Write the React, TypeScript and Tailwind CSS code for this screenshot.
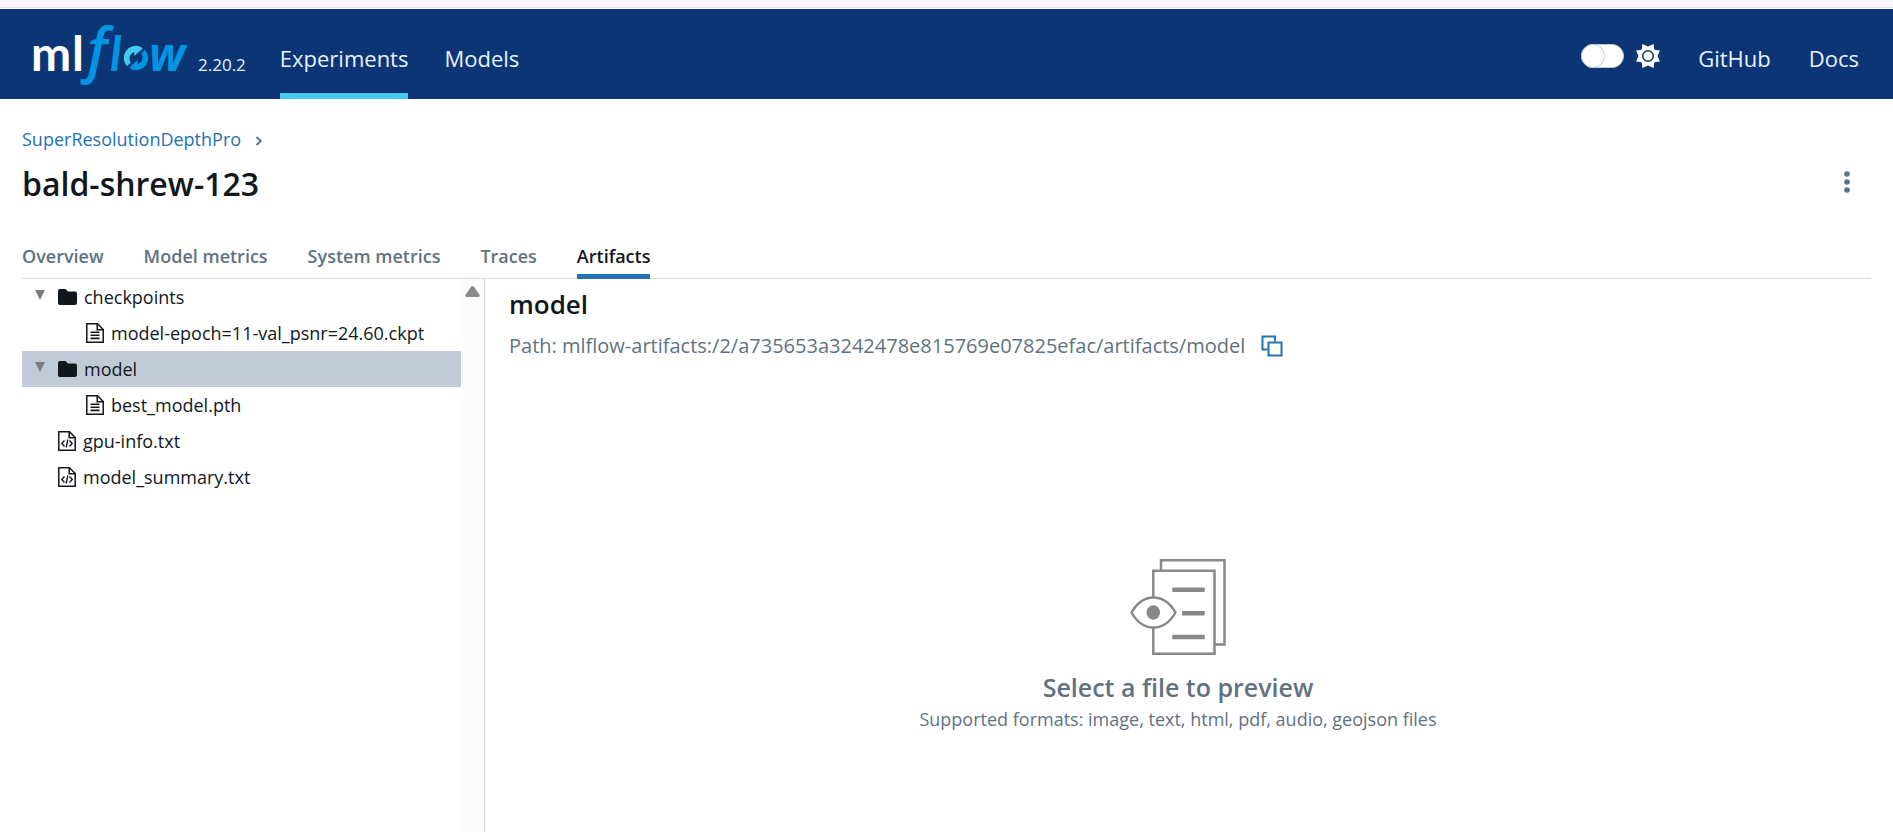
import React from "react";

const navLinks = [
  { label: "Experiments", active: true },
  { label: "Models", active: false },
];

const tabs = ["Overview", "Model metrics", "System metrics", "Traces", "Artifacts"];

function Logo() {
  return (
    <svg role="img" aria-label="mlflow" viewBox="0 0 156 66" className="h-[66px] w-[156px] shrink-0 overflow-visible">
      <g fill="#ffffff" fontFamily="Lato, sans-serif" fontSize="48" fontWeight="700">
        <text x="-3" y="50">m</text>
        <text x="38" y="50">l</text>
      </g>
      <g fill="#0194e2" fontStyle="italic">
        <text x="53" y="50" fontFamily="'Open Sans', sans-serif" fontSize="59" fontWeight="600">
          f
        </text>
        <text x="76" y="50" fontFamily="Lato, sans-serif" fontSize="48" fontWeight="700">
          l
        </text>
        <text x="115" y="50" fontFamily="'Open Sans', sans-serif" fontSize="46" fontWeight="700">
          w
        </text>
      </g>
      <path d="M93 45.300A12.200 12.200 0 0 1 106.500 25.700L108.700 27.500L100.300 35V31A6.800 6.800 0 0 0 96.800 41.500Z" fill="#43c9ed" />
      <path d="M111 28.700A12.200 12.200 0 0 1 97.500 48.300L95.300 46.500L103.700 39V43A6.800 6.800 0 0 0 107.200 32.500Z" fill="#0194e2" />
    </svg>
  );
}

function SunIcon() {
  return (
    <svg aria-hidden="true" viewBox="0 0 24 24" className="size-6">
      <path
        fill="#fff"
        d="M12 2.500 17.600 0l.7 5.700L24 6.400 21.500 12l2.500 5.600-5.700.7-.7 5.700L12 21.500 6.400 24l-.7-5.700L0 17.600 2.500 12 0 6.400l5.700-.7L6.400 0Z"
      />
      <circle cx="12" cy="12" r="5.300" fill="#fff" stroke="#0b3574" strokeWidth="1.500" />
    </svg>
  );
}

function FolderIcon() {
  return (
    <svg aria-hidden="true" viewBox="0 0 19 16" className="h-4 w-[19px] shrink-0">
      <path fill="#11171c" d="M2 0h5.500l2.500 2.500h7a2 2 0 0 1 2 2V14a2 2 0 0 1-2 2H2a2 2 0 0 1-2-2V2a2 2 0 0 1 2-2Z" />
    </svg>
  );
}

function FileIcon({ code }: { code?: boolean }) {
  return (
    <svg aria-hidden="true" viewBox="0 0 18 20" className="h-5 w-[18px] shrink-0" fill="none" stroke="#11171c" strokeWidth="1.500">
      <path d="M.8.8H11.500L17.200 6.500V19.200H.8Z" />
      <path d="M11.200.8V6.800H17.200" />
      {code ? (
        <path d="M6.500 9.500 3.800 12.500 6.500 15.500M11.500 9.500 14.200 12.500 11.500 15.500M9.800 8.500 8.200 16.500" strokeWidth="1.400" />
      ) : (
        <path d="M4.500 9.200H13.500M4.500 12.300H13.500M4.500 15.400H13.500" strokeWidth="1.600" />
      )}
    </svg>
  );
}

function PreviewIcon() {
  return (
    <svg aria-hidden="true" viewBox="0 0 96 96" className="size-24" fill="none" stroke="#888" strokeWidth="2.500">
      <path d="M31 11V1.300H94.500V85.500H84" />
      <path d="M23.300 11.700H84.500V94.700H23.300Z" fill="#fff" />
      <path d="M1.500 53.500C13 33.500 34 33.500 45.500 53.500C34 73.500 13 73.500 1.500 53.500Z" fill="#fff" />
      <ellipse cx="23.300" cy="53.500" rx="6.800" ry="7.200" fill="#888" stroke="none" />
      <path d="M42.300 30.700H74.700M52 54.300H74.700M42.300 78H74.700" strokeWidth="4.500" />
    </svg>
  );
}

function FolderRow({ name, selected }: { name: string; selected?: boolean }) {
  return (
    <button
      type="button"
      aria-expanded="true"
      className={
        selected
          ? "flex h-9 w-full items-center bg-[#c0cbd7] pl-3 text-left"
          : "flex h-9 w-full items-center pl-3 text-left"
      }
    >
      <svg aria-hidden="true" viewBox="0 0 12 12" className="mr-3 mb-1 size-3">
        <path d="M1 1H11L6 11Z" fill="#7c7c7c" />
      </svg>
      <FolderIcon />
      <span className="pl-[7px]">{name}</span>
    </button>
  );
}

function FileRow({ name, nested, code }: { name: string; nested?: boolean; code?: boolean }) {
  return (
    <button
      type="button"
      className={
        nested ? "flex h-9 w-full items-center gap-[7px] pl-16 text-left" : "flex h-9 w-full items-center gap-[7px] pl-9 text-left"
      }
    >
      <FileIcon code={code} />
      <span>{name}</span>
    </button>
  );
}

export default function App() {
  return (
    <div className="flex min-h-screen flex-col bg-white font-['Open_Sans','Noto_Sans',sans-serif] text-[18px] leading-7 text-[#11171c]">
      <div className="h-2 border-b border-[#e4dfe6] bg-[#fdf7fe]" />
      <header className="mt-px flex h-[90px] shrink-0 items-stretch justify-between bg-[#0b3574] px-[34px] text-[22px] text-[#e7f1fb]">
        <div className="flex">
          <div className="flex items-center gap-2">
            <Logo />
            <span className="pt-[22px] text-[17px]">2.20.2</span>
          </div>
          <nav className="ml-[34px] flex gap-9">
            {navLinks.map((link) => (
              <a
                key={link.label}
                href="#"
                className={
                  link.active
                    ? "flex items-center border-b-6 border-[#43c9ed] pt-[14px]"
                    : "flex items-center border-b-6 border-transparent pt-[14px]"
                }
              >
                {link.label}
              </a>
            ))}
          </nav>
        </div>
        <div className="flex items-center gap-[38px] pt-2">
          <div className="flex items-center gap-3 pb-2 pt-1">
            <button
              type="button"
              role="switch"
              aria-checked="false"
              aria-label="Dark theme"
              className="flex h-6 w-[43px] rounded-full border border-[#c0cdd8] bg-white"
            >
              <span className="-my-px -ml-px size-6 rounded-full border border-[#c0cdd8] bg-white" />
            </button>
            <SunIcon />
          </div>
          <a href="#">GitHub</a>
          <a href="#">Docs</a>
        </div>
      </header>

      <main className="flex flex-1 flex-col px-[22px] pt-[26px]">
        <nav aria-label="Breadcrumb" className="flex items-center gap-[14px]">
          <a href="#" className="text-[#2272b4]">
            SuperResolutionDepthPro
          </a>
          <svg aria-hidden="true" viewBox="0 0 8 10" className="mt-1 h-[10px] w-2" fill="none" stroke="#5f7281" strokeWidth="1.800">
            <path d="M1.500 1 5.800 5 1.500 9" />
          </svg>
        </nav>
        <div className="mt-[11px] flex items-center justify-between">
          <h1 className="text-[32px] leading-10 font-semibold">bald-shrew-123</h1>
          <button type="button" aria-label="More actions" className="mr-4 flex w-4 justify-center pb-1">
            <svg aria-hidden="true" viewBox="0 0 6 22" className="h-[22px] w-[6px]" fill="#5f7281">
              <circle cx="3" cy="3" r="2.800" />
              <circle cx="3" cy="11" r="2.800" />
              <circle cx="3" cy="19" r="2.800" />
            </svg>
          </button>
        </div>

        <div role="tablist" className="mt-[38px] flex gap-10 border-b border-[#d1d9e1] font-semibold text-[#5f7281]">
          {tabs.map((tab) => (
            <button
              key={tab}
              type="button"
              role="tab"
              aria-selected={tab === "Artifacts"}
              className={
                tab === "Artifacts"
                  ? "-mb-px border-b-5 border-[#2272b4] pb-1 text-[#11171c]"
                  : "-mb-px border-b-5 border-transparent pb-1"
              }
            >
              {tab}
            </button>
          ))}
        </div>

        <div className="flex flex-1">
          <aside className="flex w-[463px] shrink-0 border-r border-[#d1d9e1]">
            <ul className="flex-1">
              <li>
                <FolderRow name="checkpoints" />
                <FileRow name="model-epoch=11-val_psnr=24.60.ckpt" nested />
              </li>
              <li>
                <FolderRow name="model" selected />
                <FileRow name="best_model.pth" nested />
              </li>
              <li>
                <FileRow name="gpu-info.txt" code />
              </li>
              <li>
                <FileRow name="model_summary.txt" code />
              </li>
            </ul>
            <div className="flex w-[23px] justify-center bg-[#fcfcfc] pt-[7px]">
              <svg aria-hidden="true" viewBox="0 0 15 11" className="h-[11px] w-[15px]">
                <path d="M6 .8Q7.500-.6 9 .8L14.600 9Q15 11 13.500 11H1.500Q0 11 .4 9Z" fill="#8b8b8b" />
              </svg>
            </div>
          </aside>

          <section className="flex flex-1 flex-col">
            <div className="pt-[7px] pl-6">
              <h2 className="text-[26px] leading-9 font-semibold">model</h2>
              <div className="mt-[10px] flex items-center gap-4 text-[#5f7281]">
                <span className="text-[20px]">Path: mlflow-artifacts:/2/a735653a3242478e815769e07825efac/artifacts/model</span>
                <button type="button" aria-label="Copy path">
                  <svg aria-hidden="true" viewBox="0 0 22 22" className="size-[22px]" fill="none" stroke="#2272b4" strokeWidth="2">
                    <path d="M6.500 14.500H1.500V1.500H14V6.500" />
                    <path d="M7.500 7.500H20.500V20.500H7.500Z" />
                  </svg>
                </button>
              </div>
            </div>
            <div className="mt-[199px] flex flex-col items-center text-[#5f7281]">
              <PreviewIcon />
              <h3 className="mt-[14px] text-[25px] leading-9 font-semibold">Select a file to preview</h3>
              <p>Supported formats: image, text, html, pdf, audio, geojson files</p>
            </div>
          </section>
        </div>
      </main>
    </div>
  );
}
